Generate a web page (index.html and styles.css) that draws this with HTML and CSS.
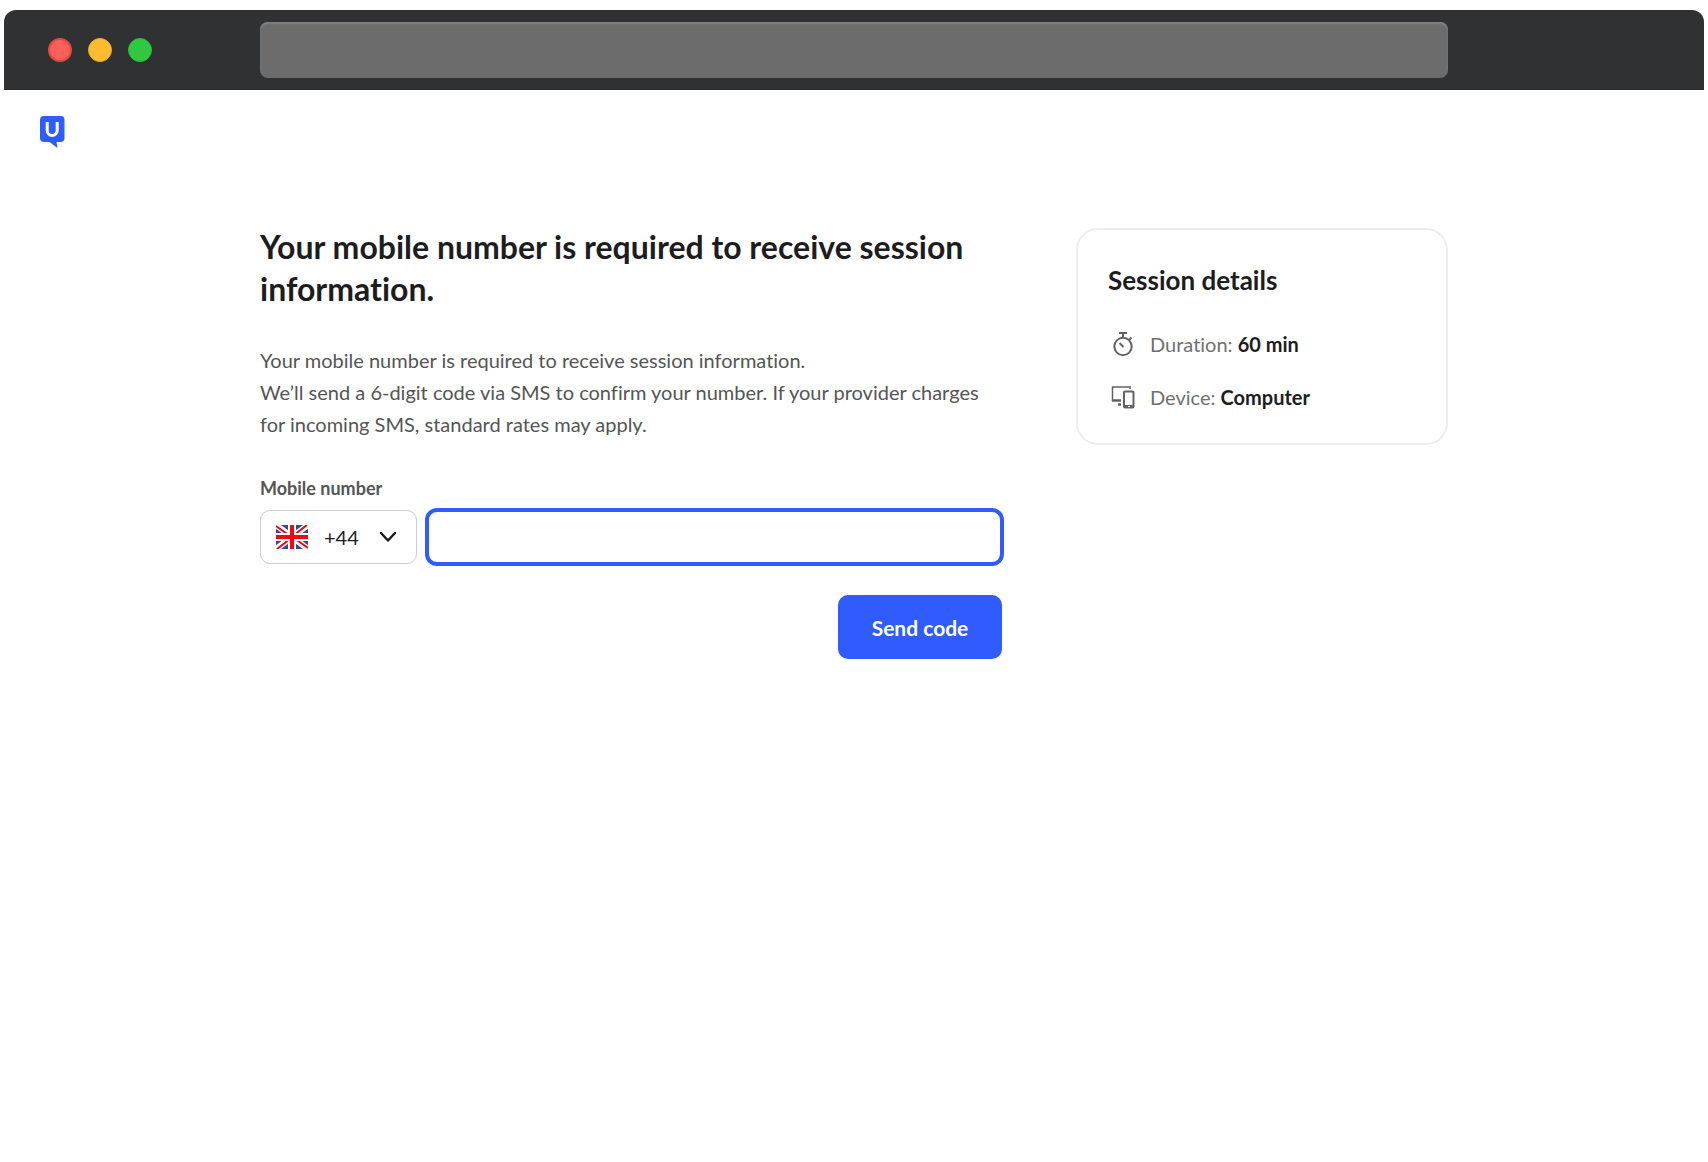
FILE: index.html
```
<!DOCTYPE html>
<html lang="en">
<head>
    <meta charset="UTF-8">
    <meta name="viewport" content="width=device-width, initial-scale=1.0">
    <title>Verify your mobile number</title>
    <link rel="stylesheet" href="styles.css">
</head>
<body>
    <div class="window">
        <div class="titlebar">
            <div class="dots">
                <span class="dot red"></span>
                <span class="dot yellow"></span>
                <span class="dot green"></span>
            </div>
            <div class="address-bar"></div>
        </div>

        <header class="header">
            <a href="#" class="logo" aria-label="Home">
                <svg width="25" height="32" viewBox="0 0 25 32">
                    <path fill="#2f5bff" d="M4 0h16.500a4 4 0 0 1 4 4v18a4 4 0 0 1-4 4h-4l1 6-8-6H4a4 4 0 0 1-4-4V4a4 4 0 0 1 4-4z"/>
                    <path fill="none" stroke="#fff" stroke-width="3" d="M7.200 6v8.500a5 5 0 0 0 10 0V6"/>
                </svg>
            </a>
        </header>

        <main class="container">
            <section class="content">
                <h1>Your mobile number is required to receive session information.</h1>
                <p class="description">
                    Your mobile number is required to receive session information.<br>
                    We’ll send a 6-digit code via SMS to confirm your number. If your provider charges for incoming SMS, standard rates may apply.
                </p>
                <form>
                    <label class="label" for="mobile">Mobile number</label>
                    <div class="phone-row">
                        <div class="country">
                            <svg class="flag" width="32" height="24" viewBox="0 0 32 24">
                                <path fill="#3348a5" d="M0 0h32v24H0z"/>
                                <path stroke="#fff" stroke-width="6" d="M0 0l32 24M32 0L0 24"/>
                                <path stroke="#f5000f" stroke-width="2" d="M0 1l14 10M31 0L18 10M1 24l13-10M32 23L18 13"/>
                                <path stroke="#fff" stroke-width="8" d="M16 0v24M0 12h32"/>
                                <path stroke="#ff0010" stroke-width="4" d="M16 0v24M0 12h32"/>
                            </svg>
                            <select id="country" aria-label="Country code">
                                <option>+44</option>
                                <option>+1</option>
                                <option>+33</option>
                            </select>
                            <svg class="chevron" width="18" height="12" viewBox="0 0 18 12">
                                <path fill="none" stroke="#1d1d1f" stroke-width="2.500" stroke-linecap="round" stroke-linejoin="round" d="M2 2l7 7.500L16 2"/>
                            </svg>
                        </div>
                        <input type="tel" id="mobile">
                    </div>
                    <button type="submit">Send code</button>
                </form>
            </section>

            <aside class="card">
                <h2>Session details</h2>
                <div class="detail">
                    <svg width="24" height="26" viewBox="0 0 24 26" fill="none" stroke="#626262" stroke-width="2">
                        <circle cx="12" cy="15.500" r="8.700"/>
                        <path d="M8 2h8M12 2v5M18 9l2.500-2.500M8.500 12l4 4"/>
                    </svg>
                    <span>Duration: <strong>60 min</strong></span>
                </div>
                <div class="detail">
                    <svg width="24" height="26" viewBox="0 0 24 26" fill="none" stroke="#626262" stroke-width="2">
                        <path stroke-width="1.500" d="M1.500 17V3H19v2"/>
                        <path stroke-width="2.500" d="M1 16.500h9M7 20.500h3"/>
                        <rect x="13" y="7.500" width="9.500" height="16" rx="1"/>
                        <path stroke-width="3" d="M13 22.500h9.500"/>
                        <path stroke="#fff" stroke-width="1" d="M17 22.500h2"/>
                    </svg>
                    <span>Device: <strong>Computer</strong></span>
                </div>
            </aside>
        </main>
    </div>
</body>
</html>
```
FILE: styles.css
```
* {
    box-sizing: border-box;
}

body {
    font-family: 'Lato', 'Liberation Sans', sans-serif;
    font-variant-ligatures: no-common-ligatures;
    margin: 0;
    background: #fff;
    color: #1d1d1f;
}

.window {
    margin: 10px 4px 0;
}

/* browser frame */
.titlebar {
    display: grid;
    grid-template-columns: 1fr minmax(0, 1188px) 1fr;
    align-items: center;
    height: 80px;
    background: #303132;
    border-bottom: 1px solid #2c2930;
    border-radius: 12px 12px 0 0;
}

.dots {
    display: flex;
    gap: 16px;
    padding-left: 44px;
}

.dot {
    width: 24px;
    height: 24px;
    border-radius: 50%;
}

.red {
    background: #fc5f57;
    border: 2px solid #e24b41;
}

.yellow {
    background: #fdbc2f;
    border: 1px solid #e5a933;
}

.green {
    background: #30c840;
    border: 1px solid #2dbc3b;
}

.address-bar {
    height: 56px;
    background: #6c6c6c;
    border-radius: 8px;
    box-shadow: inset 0 2px 2px #838383;
}

.header {
    padding: 26px 36px 0;
}

.logo {
    display: block;
    width: 25px;
    height: 32px;
}

/* page */
.container {
    display: flex;
    justify-content: space-between;
    align-items: flex-start;
    gap: 72px;
    max-width: 1188px;
    margin: 78px auto 0;
}

.content {
    flex: 1;
    max-width: 742px;
}

h1 {
    font-size: 32px;
    line-height: 42px;
    margin: 0 0 34px;
}

.description {
    font-size: 20px;
    line-height: 32px;
    color: #555;
    margin: 0 0 36px;
}

.label {
    display: block;
    font-size: 18px;
    line-height: 24px;
    font-weight: bold;
    color: #555;
    margin-bottom: 10px;
}

.phone-row {
    display: flex;
    gap: 10px;
}

.country {
    display: flex;
    align-items: center;
    position: relative;
    width: 157px;
    height: 54px;
}

.flag {
    position: absolute;
    left: 16px;
    pointer-events: none;
}

.chevron {
    position: absolute;
    right: 20px;
    pointer-events: none;
}

select {
    appearance: none;
    width: 100%;
    height: 100%;
    padding: 0 0 0 63px;
    font: inherit;
    font-size: 20px;
    color: #1d1d1f;
    background: transparent;
    border: 1px solid #ccc;
    border-radius: 10px;
}

input {
    flex: 1;
    min-width: 0;
    height: 54px;
    padding: 0 16px;
    font: inherit;
    font-size: 20px;
    border: 2px solid #2f5bff;
    border-radius: 10px;
    outline: none;
    box-shadow: 0 0 0 2px #2f5bff;
}

button {
    display: block;
    width: 164px;
    height: 64px;
    margin: 31px 0 0 auto;
    font: inherit;
    font-size: 21px;
    font-weight: bold;
    color: #fff;
    background: #2f5bff;
    border: none;
    border-radius: 10px;
    cursor: pointer;
}

.card {
    width: 372px;
    margin-top: 2px;
    padding: 30px;
    border: 2px solid #ededed;
    border-radius: 22px;
}

h2 {
    font-size: 26px;
    line-height: 40px;
    margin: 0 0 28px;
}

.detail {
    display: flex;
    align-items: center;
    gap: 15px;
    padding-left: 3px;
    font-size: 20px;
    line-height: 32px;
    color: #707070;
}

.detail + .detail {
    margin-top: 21px;
}

strong {
    color: #1d1d1f;
}

@media (max-width: 1240px) {
    .container {
        flex-direction: column;
        padding: 0 24px;
        gap: 40px;
    }

    .titlebar {
        grid-template-columns: auto 1fr;
        gap: 24px;
        padding-right: 24px;
    }
}
```
